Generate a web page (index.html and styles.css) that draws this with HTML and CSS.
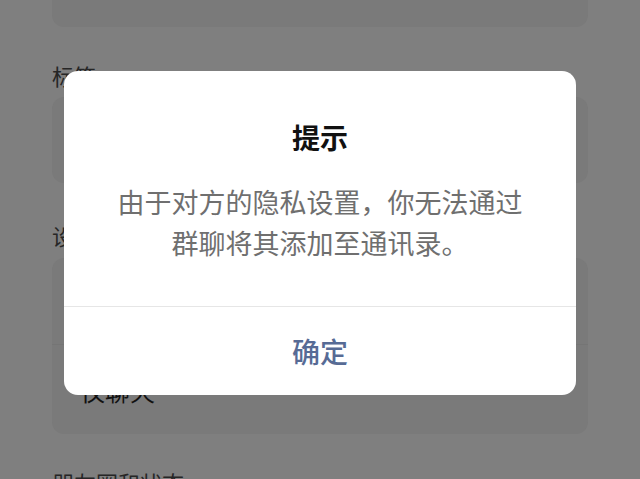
FILE: index.html
```html
<!DOCTYPE html>
<html lang="zh">
<head>
<meta charset="utf-8">
<link rel="stylesheet" href="styles.css">
</head>
<body>
<div class="page">
  <div class="card card-top"></div>
  <div class="label label-first">标签</div>
  <div class="card card-single"></div>
  <div class="label label-second">设置朋友权限</div>
  <div class="card">
    <div class="row">聊天、朋友圈、微信运动等</div>
    <div class="row row-split">仅聊天</div>
  </div>
  <div class="label label-third">朋友圈和状态</div>
</div>
<div class="dialog">
  <div class="dialog-body">
    <div class="dialog-title">提示</div>
    <div class="dialog-text">由于对方的隐私设置，你无法通过<br>群聊将其添加至通讯录。</div>
  </div>
  <div class="dialog-action">确定</div>
</div>
</body>
</html>
```
FILE: styles.css
```css
html, body {
  margin: 0;
  padding: 0;
}
body {
  width: 640px;
  height: 479px;
  overflow: hidden;
  background: #7f7f7f;
  font-family: "Noto Sans CJK SC", "Noto Sans", sans-serif;
  position: relative;
}
.page {
  padding: 0 52px;
  display: flex;
  flex-direction: column;
}
.card {
  background: #7a7a7a;
  border-radius: 12px;
}
.card-top {
  height: 27px;
  border-radius: 0 0 12px 12px;
}
.card-single {
  height: 86px;
  margin-top: 7px;
}
.label {
  font-size: 22px;
  line-height: 30px;
  color: #262626;
}
.label-first { margin-top: 33px; }
.label-second { margin-top: 37px; margin-bottom: 8px; }
.label-third { margin-top: 33px; }
.row {
  height: 86px;
  display: flex;
  align-items: center;
  padding-left: 28px;
  font-size: 25px;
  color: #111;
}
.row-split {
  border-top: 1px solid #757575;
  height: 89px;
}
.dialog {
  position: absolute;
  left: 64px;
  top: 71px;
  width: 512px;
  height: 324px;
  background: #fff;
  border-radius: 14px;
  display: flex;
  flex-direction: column;
  overflow: hidden;
}
.dialog-body {
  padding: 48px 0 0;
  height: 187px;
  border-bottom: 1px solid #e6e6e6;
  text-align: center;
}
.dialog-title {
  font-size: 28px;
  line-height: 36px;
  font-weight: 700;
  color: #111;
}
.dialog-text {
  margin-top: 26px;
  font-size: 27px;
  line-height: 41px;
  color: #6f6f6f;
}
.dialog-action {
  flex: 1;
  display: flex;
  align-items: center;
  justify-content: center;
  font-size: 28px;
  font-weight: 500;
  color: #576b95;
}
```
